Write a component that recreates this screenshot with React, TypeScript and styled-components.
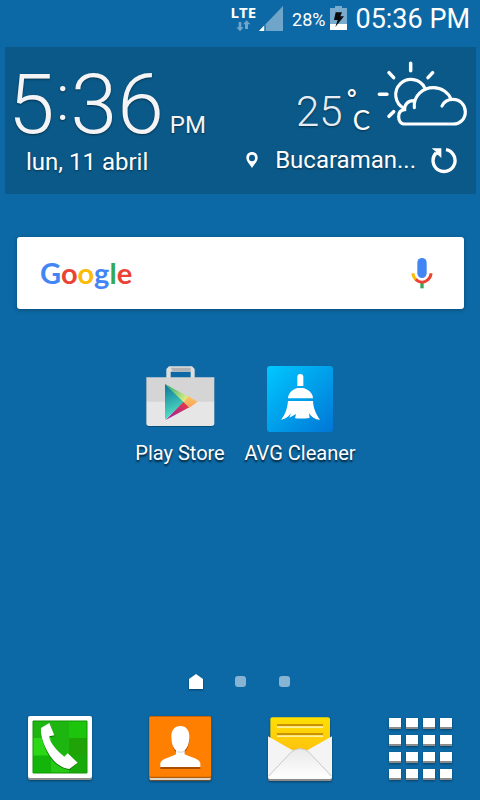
import React from "react";
import styled, { createGlobalStyle } from "styled-components";

const GlobalStyle = createGlobalStyle`
  * { box-sizing: border-box; }
  body {
    margin: 0;
    background: #0c69a5;
    color: #fff;
    font-family: Roboto, "Noto Sans", sans-serif;
  }
  button {
    margin: 0;
    padding: 0;
    border: 0;
    background: none;
    color: inherit;
    font: inherit;
    cursor: pointer;
  }
  svg { display: block; flex: none; }
`;

const Screen = styled.div`
  min-height: 100vh;
  display: flex;
  flex-direction: column;
`;

const StatusBar = styled.header`
  display: flex;
  justify-content: flex-end;
  align-items: flex-start;
  height: 47px;
  padding: 6px 10px 0 0;
`;

const Network = styled.div`
  display: flex;
  flex-direction: column;
  align-items: center;
  gap: 2px;
  margin-right: 3px;
`;

const NetworkType = styled.span`
  font: 700 15px/12px "Open Sans", sans-serif;
`;

const BatteryLevel = styled.span`
  font-size: 18px;
  line-height: 28px;
  margin: 0 5px 0 9px;
`;

const StatusTime = styled.time`
  font-size: 27px;
  line-height: 26px;
  margin-left: 8px;
`;

const Widget = styled.section`
  display: flex;
  justify-content: space-between;
  margin: 0 4px 0 5px;
  padding: 13px 6px 18px;
  background: #0a5988;
  text-shadow: 0 1px 2px rgba(0, 0, 0, 0.45);
`;

const ClockSide = styled.div`
  padding-top: 3px;
`;

const Clock = styled.time`
  display: flex;
  align-items: baseline;
  margin-left: -3px;
  color: #f4f4f6;
  font-size: 84px;
  font-weight: 300;
  line-height: 84px;
`;

const Colon = styled.span`
  align-self: flex-start;
  width: 16px;
  font-size: 64px;
  line-height: 72px;
  text-align: center;
`;

const Meridiem = styled.span`
  margin-left: 6px;
  font-size: 24px;
  font-weight: 400;
  line-height: 28px;
`;

const DateText = styled.p`
  margin: 1px 0 0 15px;
  font-size: 24px;
  line-height: 28px;
`;

const WeatherSide = styled.div`
  display: flex;
  flex-direction: column;
  align-items: flex-end;
`;

const Conditions = styled.div`
  display: flex;
  align-items: flex-end;
`;

const Temperature = styled.span`
  color: #e6ecf5;
  font-size: 42px;
  font-weight: 300;
  line-height: 36px;
`;

const Unit = styled.span`
  display: flex;
  flex-direction: column;
  margin: 0 6px 0 3px;
  font-size: 26px;
  line-height: 20px;
`;

const Degree = styled.span`
  font-size: 32px;
  line-height: 18px;
`;

const Scale = styled.span`
  padding-left: 7px;
  font-family: Lato, sans-serif;
`;

const Location = styled.div`
  display: flex;
  align-items: center;
  margin: 16px 12px 0 0;
  font-size: 24px;
  line-height: 28px;
`;

const City = styled.span`
  margin: 0 14px 0 16px;
`;

const SearchBar = styled.div`
  display: flex;
  justify-content: space-between;
  align-items: center;
  height: 72px;
  margin: 43px 16px 0 17px;
  padding: 0 30px 0 23px;
  background: #fff;
  border-radius: 3px;
  box-shadow: 0 1px 4px rgba(0, 0, 0, 0.3);
`;

const Wordmark = styled.button`
  flex: 1;
  text-align: left;
  font: 700 29px/40px Lato, sans-serif;
`;

const Letter = styled.span<{ $color: string }>`
  color: ${(p) => p.$color};
`;

const AppGrid = styled.main`
  display: grid;
  grid-template-columns: repeat(4, 1fr);
  margin-top: 57px;
`;

const AppShortcut = styled.button<{ $column: number }>`
  grid-column: ${(p) => p.$column};
  display: flex;
  flex-direction: column;
  align-items: center;
  gap: 7px;
  white-space: nowrap;
  font-size: 20px;
  line-height: 28px;
  text-shadow: 0 2px 2px rgba(0, 0, 0, 0.7);
`;

const IconFrame = styled.span`
  display: flex;
  align-items: flex-start;
  height: 66px;
`;

const Pager = styled.nav`
  display: flex;
  justify-content: center;
  align-items: center;
  gap: 30px;
  margin-top: auto;
  height: 18px;
`;

const PageDot = styled.button`
  width: 14px;
  height: 14px;
  display: grid;
  place-items: center;
  &::before {
    content: "";
    width: 11px;
    height: 11px;
    border-radius: 3px;
    background: #86b4d2;
  }
`;

const HomeDot = styled.button`
  filter: drop-shadow(0 1px 1px rgba(0, 0, 0, 0.4));
`;

const Dock = styled.footer`
  display: grid;
  grid-template-columns: repeat(4, 1fr);
  justify-items: center;
  align-items: start;
  padding: 26px 0 18px;
`;

const DockButton = styled.button`
  filter: drop-shadow(0 1px 1px rgba(0, 0, 0, 0.4));
`;

const DataArrows = () => (
  <svg width="15" height="12" viewBox="0 0 45 36" fill="#72a6ca">
    <path d="M8 6h8v16h7L12 34 1 22h7zM27 27V13h-6L32 1l11 12h-7v14z" />
  </svg>
);

const SignalIcon = () => (
  <svg width="24" height="25" viewBox="0 0 72 75">
    <path d="M72 0V75H0z" fill="#6fa5c9" />
    <path d="M0 75L17 57V75z" fill="#fff" />
    <path d="M18 57V75" stroke="#0c69a5" strokeWidth="4" />
  </svg>
);

const BatteryIcon = () => (
  <svg width="17" height="24" viewBox="0 0 51 72">
    <path d="M0 6H15V0H36V6H51V72H0z" fill="#78abcd" />
    <path d="M0 54H51V72H0z" fill="#fff" />
    <path d="M17 19H36L31 31H42L16 63 23 42H12z" fill="#0b0b0b" />
  </svg>
);

const WeatherIcon = () => (
  <svg width="94" height="70" viewBox="408 60 282 210" fill="none" stroke="#fff" strokeWidth="9.5" strokeLinecap="round">
    <path d="M512 70V92M447 98L461 113M578 98L564 113M418 163H441M447 229L461 215" strokeWidth="10.5" />
    <path d="M554 143A46 46 0 1 0 492 205" />
    <path d="M523 203C519 167 550 143 580 143C605 143 626 158 633 178" />
    <path d="M606 198C612 184 625 178 639 178C660 178 676 195 676 215C676 237 660 252 640 252H495C481 252 476 241 476 230C476 217 484 210 494 209C493 195 503 182 521 182" />
  </svg>
);

const PinIcon = () => (
  <svg width="14" height="18" viewBox="0 0 42 54">
    <path fillRule="evenodd" fill="#fff" d="M21 3C11 3 4 10 4 20C4 31 14 38 21 51C28 38 38 31 38 20C38 10 31 3 21 3ZM21 11A9 10 0 1 1 21 31A9 10 0 1 1 21 11Z" />
  </svg>
);

const RefreshIcon = () => (
  <svg width="28" height="28" viewBox="570 320 84 84">
    <path d="M618 331A33 33 0 1 1 588 341" fill="none" stroke="#fff" strokeWidth="10" />
    <path d="M575 327H604V356L594 347 583 345 588 337z" fill="#fff" />
  </svg>
);

const MicIcon = () => (
  <svg width="24" height="32" viewBox="510 95 72 96">
    <rect x="532" y="98" width="28" height="60" rx="14" fill="#4285f4" />
    <path d="M546 172V189" stroke="#34a853" strokeWidth="10" />
    <path d="M519 144Q519 155 528 163" fill="none" stroke="#fbbc05" strokeWidth="9" />
    <path d="M527 162C539 173 553 173 564 163Q573 155 573 144" fill="none" stroke="#ea4335" strokeWidth="9" />
  </svg>
);

const PlayStoreIcon = () => (
  <svg width="70" height="62" viewBox="47 33 210 186">
    <defs>
      <linearGradient id="playBlue" x1="0" y1="0" x2="0.25" y2="1">
        <stop offset="0" stopColor="#0b7299" />
        <stop offset="1" stopColor="#55e6c4" />
      </linearGradient>
      <linearGradient id="playGreen" x1="0" y1="0" x2="1" y2="0.6">
        <stop offset="0" stopColor="#20a56c" />
        <stop offset="1" stopColor="#d8ed82" />
      </linearGradient>
      <linearGradient id="playRed" x1="0" y1="1" x2="1" y2="0">
        <stop offset="0" stopColor="#8f20b0" />
        <stop offset="1" stopColor="#ef3b3c" />
      </linearGradient>
      <linearGradient id="playOrange" x1="0" y1="0" x2="0" y2="1">
        <stop offset="0" stopColor="#ffc55c" />
        <stop offset="1" stopColor="#f9a05f" />
      </linearGradient>
    </defs>
    <path d="M111 70V42L119 34H188L196 42V70H184V50H124V70z" fill="#dedede" />
    <path d="M124 38H184V49H130z" fill="#b2b2b2" />
    <rect x="51" y="69" width="204" height="147" rx="8" fill="#084d7a" />
    <path d="M51 67H255V141H51z" fill="#d5d5d5" />
    <path d="M51 140H255V205Q255 213 247 213H59Q51 213 51 205z" fill="#e6e6e6" />
    <path d="M107 87L165 141 107 194z" fill="url(#playBlue)" />
    <path d="M107 87L177 125 163 142z" fill="url(#playGreen)" />
    <path d="M109 195L180 157 163 140z" fill="url(#playRed)" />
    <path d="M177 124L205 140 180 158 163 141z" fill="url(#playOrange)" />
  </svg>
);

const CleanerIcon = () => (
  <svg width="66" height="66" viewBox="81 33 198 198">
    <defs>
      <linearGradient id="cleaner" x1="0" y1="0" x2="1" y2="1">
        <stop offset="0" stopColor="#00c8ff" />
        <stop offset="1" stopColor="#0076d6" />
      </linearGradient>
    </defs>
    <rect x="81" y="33" width="198" height="198" rx="9" fill="url(#cleaner)" />
    <g fill="#fff">
      <path d="M172 66Q172 57 181 57Q190 57 190 66V93H172z" />
      <path d="M144 130C145 111 160 103 172 99H190C202 103 218 111 219 130z" />
      <path d="M144 138H219C220 160 228 178 240 194Q225 194 213 182L207 175 209 189Q185 192 165 190L168 177 148 188 153 175Q140 192 123 194C136 179 142 160 144 138z" />
    </g>
  </svg>
);

const PhoneIcon = () => (
  <svg width="64" height="64" viewBox="39 33 192 192">
    <rect x="39" y="37" width="192" height="188" rx="6" fill="#8d8f8f" />
    <rect x="39" y="33" width="192" height="186" rx="6" fill="#fff" />
    <path d="M54 48H216V204H54z" fill="#1db510" />
    <path d="M54 99H108V152H54z" fill="#2bd816" />
    <path d="M162 48H216V99H162z" fill="#1cc50c" />
    <path d="M162 99H216V152H162z" fill="#20a307" />
    <path d="M54 152H108V204H54z" fill="#13b50b" />
    <path d="M108 152H162V204H108z" fill="#25c916" />
    <path d="M162 152H216V204H162z" fill="#18aa0a" />
    <path d="M54 48H216V204H54z" fill="none" stroke="#129507" strokeWidth="3" />
    <path d="M79 72L104 57 119 94 104 97C105 118 128 142 148 158L158 147 188 175 164 195C137 192 112 172 99 147C87 125 77 98 79 72z" fill="#147609" />
    <path d="M78 69L103 54 118 91 103 94C104 115 128 139 148 155L158 145 188 173 163 192C137 189 113 169 100 144C88 122 76 95 78 69z" fill="#fff" />
  </svg>
);

const ContactsIcon = () => (
  <svg width="63" height="66" viewBox="41 33 189 198">
    <rect x="41" y="36" width="187" height="191" rx="5" fill="#8a5527" />
    <rect x="43" y="40" width="183" height="185" rx="4" fill="#ded5c6" />
    <rect x="41" y="33" width="187" height="186" rx="5" fill="#b85c08" />
    <rect x="42" y="35" width="185" height="180" rx="4" fill="#ff8000" />
    <path d="M75 186H195V192H75z" fill="#a94e00" />
    <path d="M109 96Q110 132 122 140V154H148V140Q161 132 162 102z" fill="#a94e00" />
    <path d="M135 63C153 63 163 77 162 97C161 118 156 130 148 136V148C171 159 191 161 195 174V186H75V174C80 161 101 159 122 148V136C114 130 109 118 108 97C107 77 117 63 135 63z" fill="#fff" />
    <path d="M122 136Q135 143 148 136L143 143H128z" fill="#ddd" />
  </svg>
);

const MessagesIcon = () => (
  <svg width="64" height="65" viewBox="39 33 192 195">
    <defs>
      <linearGradient id="note" x1="0" y1="0" x2="0" y2="1">
        <stop offset="0" stopColor="#ffdf00" />
        <stop offset="1" stopColor="#ffbb13" />
      </linearGradient>
      <linearGradient id="envelope" x1="0" y1="0" x2="0" y2="1">
        <stop offset="0" stopColor="#e9e9e9" />
        <stop offset="1" stopColor="#fff" />
      </linearGradient>
    </defs>
    <rect x="46" y="37" width="179" height="130" rx="6" fill="url(#note)" />
    <path d="M66 57H204V64H66zM66 84H204V91H66z" fill="#c99300" />
    <path d="M66 64H204V69H66zM66 91H204V96H66z" fill="#fff0a0" />
    <path d="M39 190V222Q39 228 45 228H225Q231 228 231 222V190z" fill="#8c8c8c" />
    <path d="M39 94L111 135H158L231 94V216Q231 222 225 222H45Q39 222 39 216z" fill="#f4f4f4" />
    <path d="M41 215L108 142Q120 131 135 131Q150 131 162 142L229 215Q230 221 222 221H48Q40 221 41 215z" fill="url(#envelope)" />
    <path d="M41 213L108 142Q120 131 135 131Q150 131 162 142L229 213" fill="none" stroke="#c9c9c9" strokeWidth="3" />
  </svg>
);

const cells = [0, 1, 2, 3];

const AppsIcon = () => (
  <svg width="64" height="65" viewBox="-1 -2 64 65">
    {cells.map((row) =>
      cells.map((col) => (
        <g key={`${row}-${col}`}>
          <rect x={col * 17} y={row * 17} width="12" height="11" fill="#8c8c8c" />
          <rect x={col * 17} y={row * 17} width="12" height="9" fill="#fff" />
        </g>
      ))
    )}
  </svg>
);

const HomeIcon = () => (
  <svg width="14" height="15" viewBox="0 0 14 15">
    <path d="M7 0L14 5V15H0V5z" fill="#fff" />
  </svg>
);

const wordmark: [string, string][] = [
  ["G", "#4285f4"],
  ["o", "#ea4335"],
  ["o", "#fbbc05"],
  ["g", "#4285f4"],
  ["l", "#34a853"],
  ["e", "#ea4335"],
];

const dockItems = [
  { label: "Teléfono", Icon: PhoneIcon },
  { label: "Contactos", Icon: ContactsIcon },
  { label: "Mensajes", Icon: MessagesIcon },
  { label: "Aplicaciones", Icon: AppsIcon },
];

export default function App() {
  return (
    <Screen>
      <GlobalStyle />
      <StatusBar>
        <Network>
          <NetworkType>LTE</NetworkType>
          <DataArrows />
        </Network>
        <SignalIcon />
        <BatteryLevel>28%</BatteryLevel>
        <BatteryIcon />
        <StatusTime>05:36 PM</StatusTime>
      </StatusBar>

      <Widget>
        <ClockSide>
          <Clock>
            <span>5</span>
            <Colon>:</Colon>
            <span>36</span>
            <Meridiem>PM</Meridiem>
          </Clock>
          <DateText>lun, 11 abril</DateText>
        </ClockSide>
        <WeatherSide>
          <Conditions>
            <Temperature>25</Temperature>
            <Unit>
              <Degree>°</Degree>
              <Scale>C</Scale>
            </Unit>
            <WeatherIcon />
          </Conditions>
          <Location>
            <PinIcon />
            <City>Bucaraman...</City>
            <button type="button" aria-label="Actualizar">
              <RefreshIcon />
            </button>
          </Location>
        </WeatherSide>
      </Widget>

      <SearchBar role="search">
        <Wordmark type="button" aria-label="Google">
          {wordmark.map(([letter, color], i) => (
            <Letter key={i} $color={color}>
              {letter}
            </Letter>
          ))}
        </Wordmark>
        <button type="button" aria-label="Búsqueda por voz">
          <MicIcon />
        </button>
      </SearchBar>

      <AppGrid>
        <AppShortcut type="button" $column={2}>
          <IconFrame>
            <PlayStoreIcon />
          </IconFrame>
          Play Store
        </AppShortcut>
        <AppShortcut type="button" $column={3}>
          <IconFrame>
            <CleanerIcon />
          </IconFrame>
          AVG Cleaner
        </AppShortcut>
      </AppGrid>

      <Pager aria-label="Pantallas">
        <HomeDot type="button" aria-label="Inicio">
          <HomeIcon />
        </HomeDot>
        <PageDot type="button" aria-label="Pantalla 2" />
        <PageDot type="button" aria-label="Pantalla 3" />
      </Pager>

      <Dock>
        {dockItems.map(({ label, Icon }) => (
          <DockButton key={label} type="button" aria-label={label}>
            <Icon />
          </DockButton>
        ))}
      </Dock>
    </Screen>
  );
}
